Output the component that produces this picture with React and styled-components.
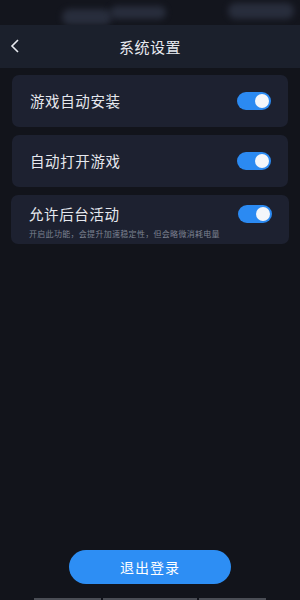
import React, { useState } from "react";
import styled, { createGlobalStyle } from "styled-components";

const Global = createGlobalStyle`
  html, body { margin: 0; padding: 0; background: #12141b; }
  body { font-family: "Noto Sans CJK SC", "Noto Sans", sans-serif; }
`;

const Page = styled.div`
  width: 300px;
  height: 600px;
  background: #12141b;
  display: flex;
  flex-direction: column;
  overflow: hidden;
`;

const StatusBar = styled.div`
  height: 25px;
  position: relative;
  overflow: hidden;
  background: #13151d;
`;

const Blob = styled.div`
  position: absolute;
  top: ${(p) => p.top}px;
  left: ${(p) => p.left}px;
  width: ${(p) => p.w}px;
  height: ${(p) => p.h}px;
  border-radius: 10px;
  background: #2c3242;
  filter: blur(3px);
  opacity: 0.85;
`;

const Header = styled.div`
  height: 43px;
  background: #1b202c;
  display: flex;
  align-items: center;
  justify-content: center;
  position: relative;
`;

const Back = styled.div`
  position: absolute;
  left: 9px;
  top: 13px;
  display: flex;
`;

const Title = styled.div`
  color: #e8eaf0;
  font-size: 15px;
  letter-spacing: 0.5px;
`;

const List = styled.div`
  display: flex;
  flex-direction: column;
  gap: 8px;
  padding: 7px 12px 0;
`;

const Card = styled.div`
  background: #1d2130;
  border-radius: 7px;
  min-height: ${(p) => (p.sub ? 49 : 52)}px;
  margin: ${(p) => (p.sub ? "0 -1px" : "0")};
  padding: ${(p) => (p.sub ? "8px 17px 0 18px" : "0 17px 0 18px")};
  box-sizing: border-box;
  display: flex;
  align-items: ${(p) => (p.sub ? "flex-start" : "center")};
  justify-content: space-between;
`;

const TextCol = styled.div`
  display: flex;
  flex-direction: column;
`;

const Label = styled.div`
  color: #e6e8ee;
  font-size: 14.5px;
  letter-spacing: 0.6px;
  line-height: 22px;
`;

const Sub = styled.div`
  color: #7c8190;
  font-size: 8px;
  letter-spacing: 0.3px;
  line-height: 12px;
  margin-top: 3px;
`;

const Track = styled.button`
  width: 34px;
  height: 18px;
  border: none;
  padding: 0;
  border-radius: 9px;
  background: ${(p) => (p.on ? "#2b8af2" : "#3a3f4d")};
  position: relative;
  cursor: pointer;
  margin-top: ${(p) => (p.offset ? "2px" : "0")};
  flex-shrink: 0;
`;

const Knob = styled.span`
  position: absolute;
  top: 2px;
  left: ${(p) => (p.on ? "18px" : "2px")};
  width: 14px;
  height: 14px;
  border-radius: 50%;
  background: #f4f6fa;
`;

const Spacer = styled.div`
  flex: 1;
`;

const Logout = styled.button`
  align-self: center;
  width: 162px;
  height: 34px;
  border: none;
  border-radius: 17px;
  background: #2d8ef4;
  color: #ffffff;
  font-family: "Noto Sans CJK SC", sans-serif;
  font-size: 14px;
  letter-spacing: 1px;
  margin-bottom: 13px;
`;

const NavBar = styled.div`
  display: flex;
  justify-content: center;
  gap: 2px;
  height: 3px;
`;

const NavSeg = styled.div`
  width: ${(p) => p.w}px;
  height: 2px;
  margin-top: 1px;
  background: #4a4d55;
`;

function Toggle({ on, onClick, offset }) {
  return (
    <Track on={on} onClick={onClick} offset={offset}>
      <Knob on={on} />
    </Track>
  );
}

export default function App() {
  const [s, setS] = useState({ a: true, b: true, c: true });
  const flip = (k) => setS({ ...s, [k]: !s[k] });
  return (
    <Page>
      <Global />
      <StatusBar>
        <Blob top={9} left={62} w={50} h={16} />
        <Blob top={6} left={110} w={56} h={13} />
        <Blob top={3} left={228} w={66} h={16} />
      </StatusBar>
      <Header>
        <Back>
          <svg width="12" height="16" viewBox="0 0 12 16">
            <path d="M9 2 L3 8 L9 14" stroke="#e8eaf0" strokeWidth="1.6" fill="none" />
          </svg>
        </Back>
        <Title>系统设置</Title>
      </Header>
      <List>
        <Card>
          <Label>游戏自动安装</Label>
          <Toggle on={s.a} onClick={() => flip("a")} />
        </Card>
        <Card>
          <Label>自动打开游戏</Label>
          <Toggle on={s.b} onClick={() => flip("b")} />
        </Card>
        <Card sub>
          <TextCol>
            <Label>允许后台活动</Label>
            <Sub>开启此功能，会提升加速稳定性，但会略微消耗电量</Sub>
          </TextCol>
          <Toggle on={s.c} onClick={() => flip("c")} offset />
        </Card>
      </List>
      <Spacer />
      <Logout>退出登录</Logout>
      <NavBar>
        <NavSeg w={67} />
        <NavSeg w={94} />
        <NavSeg w={67} />
      </NavBar>
    </Page>
  );
}
